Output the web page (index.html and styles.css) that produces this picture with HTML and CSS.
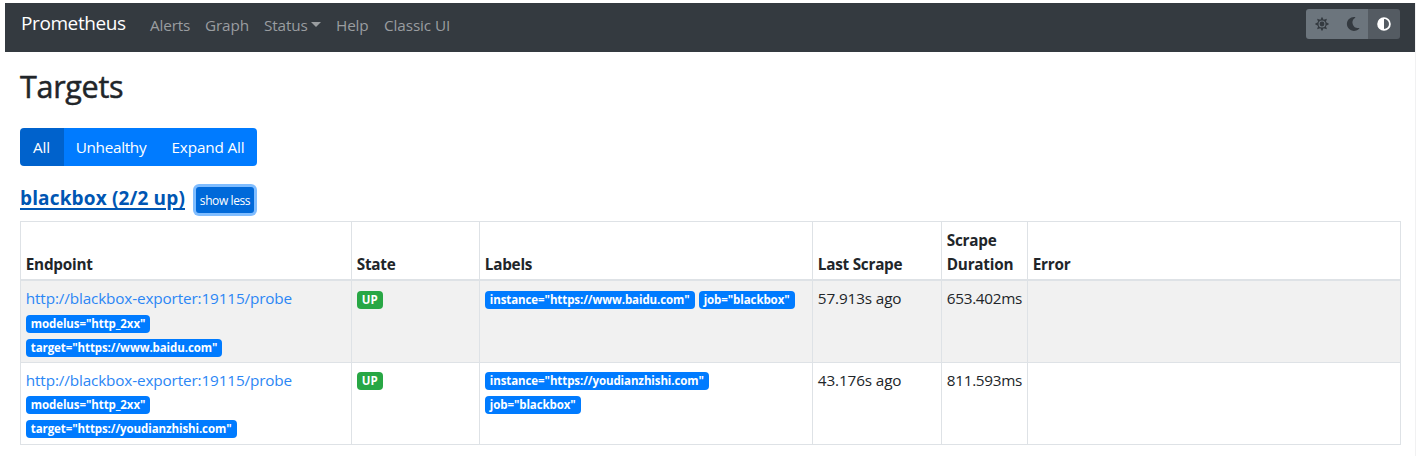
FILE: index.html
```html
<!DOCTYPE html>
<html lang="en">
<head>
<meta charset="utf-8">
<title>Prometheus Targets</title>
<link rel="stylesheet" href="styles.css">
</head>
<body>
<div class="page">
  <nav class="navbar">
    <a class="brand">Prometheus</a>
    <a class="nav-link alerts">Alerts</a>
    <a class="nav-link graph">Graph</a>
    <a class="nav-link status">Status<span class="caret"></span></a>
    <a class="nav-link help">Help</a>
    <a class="nav-link classic">Classic UI</a>
    <div class="theme-group">
      <button class="theme-btn" aria-label="Light theme">
        <svg width="16" height="16" viewBox="0 0 16 16"><path fill="currentColor" fill-rule="evenodd" d="M8 .8l1.600 3 3.300-1-1 3.300 3.300 1.900-3.300 1.900 1 3.300-3.300-1L8 15.200l-1.600-3-3.300 1 1-3.300L.8 8l3.300-1.900-1-3.300 3.300 1zM8 4.500a3.500 3.500 0 1 0 0 7 3.500 3.500 0 0 0 0-7z"/><circle cx="8" cy="8" r="2.400" fill="currentColor"/></svg>
      </button>
      <button class="theme-btn" aria-label="Dark theme">
        <svg width="16" height="16" viewBox="0 0 16 16"><path fill="currentColor" d="M9.900 1A7 7 0 1 0 14.300 12.400c.2-.3 0-.6-.4-.5A5.500 5.500 0 0 1 10.100 1.800c.4-.2.3-.7-.2-.8z"/></svg>
      </button>
      <button class="theme-btn active" aria-label="Automatic theme">
        <svg width="16" height="16" viewBox="0 0 16 16"><circle cx="8" cy="8" r="5.900" fill="none" stroke="currentColor" stroke-width="1.800"/><path fill="currentColor" d="M8 2a6 6 0 0 0 0 12z"/></svg>
      </button>
    </div>
  </nav>
  <main class="content">
    <h2 class="title">Targets</h2>
    <div class="btn-group">
      <button class="btn active">All</button>
      <button class="btn unhealthy">Unhealthy</button>
      <button class="btn expand">Expand All</button>
    </div>
    <div class="pool-head">
      <a class="pool-name">blackbox (2/2 up)</a>
      <button class="toggle">show less</button>
    </div>
    <table class="targets">
      <colgroup><col class="c1"><col class="c2"><col class="c3"><col class="c4"><col class="c5"><col class="c6"></colgroup>
      <thead>
        <tr><th>Endpoint</th><th>State</th><th>Labels</th><th>Last Scrape</th><th>Scrape Duration</th><th>Error</th></tr>
      </thead>
      <tbody>
        <tr>
          <td><a class="endpoint">http://blackbox-exporter:19115/probe</a><div><span class="badge">modelus="http_2xx"</span></div><div><span class="badge">target="https://www.baidu.com"</span></div></td>
          <td><span class="badge up">UP</span></td>
          <td><span class="badge">instance="https://www.baidu.com"</span><span class="badge next">job="blackbox"</span></td>
          <td>57.913s ago</td>
          <td class="duration">653.402ms</td>
          <td></td>
        </tr>
        <tr>
          <td><a class="endpoint">http://blackbox-exporter:19115/probe</a><div><span class="badge">modelus="http_2xx"</span></div><div><span class="badge">target="https://youdianzhishi.com"</span></div></td>
          <td><span class="badge up">UP</span></td>
          <td><div><span class="badge">instance="https://youdianzhishi.com"</span></div><div><span class="badge">job="blackbox"</span></div></td>
          <td>43.176s ago</td>
          <td class="duration">811.593ms</td>
          <td></td>
        </tr>
      </tbody>
    </table>
  </main>
</div>
</body>
</html>
```
FILE: styles.css
```css
* { box-sizing: border-box; }
body {
  margin: 0;
  background: #fff;
  color: #212529;
  font: 15.3px/24px "Open Sans", "Noto Sans", sans-serif;
  letter-spacing: -0.13px;
}
button { font: inherit; letter-spacing: inherit; border: 0; margin: 0; padding: 0; white-space: nowrap; }
.page { width: 1411px; height: 453px; margin: 3px 0 0 5px; border-right: 1px solid #f1f1f2; overflow: hidden; }
.navbar { display: flex; align-items: center; height: 49px; width: 1411px; padding: 0 16px; background: #343a40; }
.brand { width: 129px; color: #fff; font-size: 19px; letter-spacing: -0.4px; padding-bottom: 9px; white-space: nowrap; }
.nav-link { color: #9a9da0; padding-bottom: 6px; letter-spacing: -0.15px; white-space: nowrap; }
.alerts { width: 55px; }
.graph { width: 59px; }
.status { width: 72px; }
.help { width: 48px; }
.classic { letter-spacing: -0.1px; }
.caret { display: inline-block; margin-left: 3px; vertical-align: 4px; border: 5px solid transparent; border-top-color: currentColor; border-bottom: 0; }
.theme-group { display: flex; width: 94px; height: 30px; margin: 0 0 7px auto; border-radius: 3px; overflow: hidden; }
.theme-btn { display: flex; align-items: center; justify-content: center; width: 31px; background: #6c757d; color: #343a40; }
.theme-btn.active { width: 32px; background: #545b62; color: #fff; }
.content { padding: 15px 15px 0; }
.title { margin: 0; font-size: 30.5px; line-height: 38px; font-weight: 500; letter-spacing: -0.3px; -webkit-text-stroke: 0.5px currentColor; }
.btn-group { display: flex; width: 237px; height: 38px; margin-top: 23px; border-radius: 4px; overflow: hidden; }
.btn { background: #007bff; color: #fff; }
.btn.active { width: 44px; padding-right: 1px; background: #0062cc; }
.unhealthy { width: 94px; letter-spacing: -0.3px; }
.expand { width: 99px; padding-left: 1px; }
.pool-head { display: flex; align-items: center; height: 28px; margin-top: 18px; }
.pool-name { width: 176px; color: #0056b3; font-size: 19px; letter-spacing: 0.15px; font-weight: 700; text-decoration: underline; text-decoration-thickness: 2px; text-underline-offset: 3px; white-space: nowrap; }
.toggle { width: 58px; height: 26px; margin-top: 4px; padding-top: 2px; border-radius: 3px; background: #0069d9; color: #fff; font-size: 12px; line-height: 24px; letter-spacing: -0.4px; box-shadow: 0 0 0 3px #80bdff; }
.targets { width: 1381px; margin-top: 9px; table-layout: fixed; border-collapse: collapse; }
.c1 { width: 331px; }
.c2 { width: 128px; }
.c3 { width: 333px; }
.c4 { width: 129px; }
.c5 { width: 86px; }
.c6 { width: 373px; }
th, td { border: 1px solid #dee2e6; padding: 5px 4.8px 4px; text-align: left; vertical-align: top; }
th { padding: 5.5px 4.8px 3.5px; vertical-align: bottom; border-bottom-width: 2px; letter-spacing: -0.25px; }
tbody tr:first-child { background: #f1f1f1; }
tbody tr:first-child td { padding: 5px 4.8px 3.5px; }
.duration { letter-spacing: -0.3px; }
.endpoint { display: block; color: #2b86f5; letter-spacing: -0.14px; }
.badge { display: inline-block; height: 18px; padding: 0 5px; border-radius: 4px; background: #007bff; color: #fff; font-size: 11.5px; line-height: 18px; font-weight: 700; letter-spacing: -0.09px; vertical-align: middle; white-space: nowrap; }
.badge.next { margin-left: 4px; }
.up { background: #28a745; }
```
